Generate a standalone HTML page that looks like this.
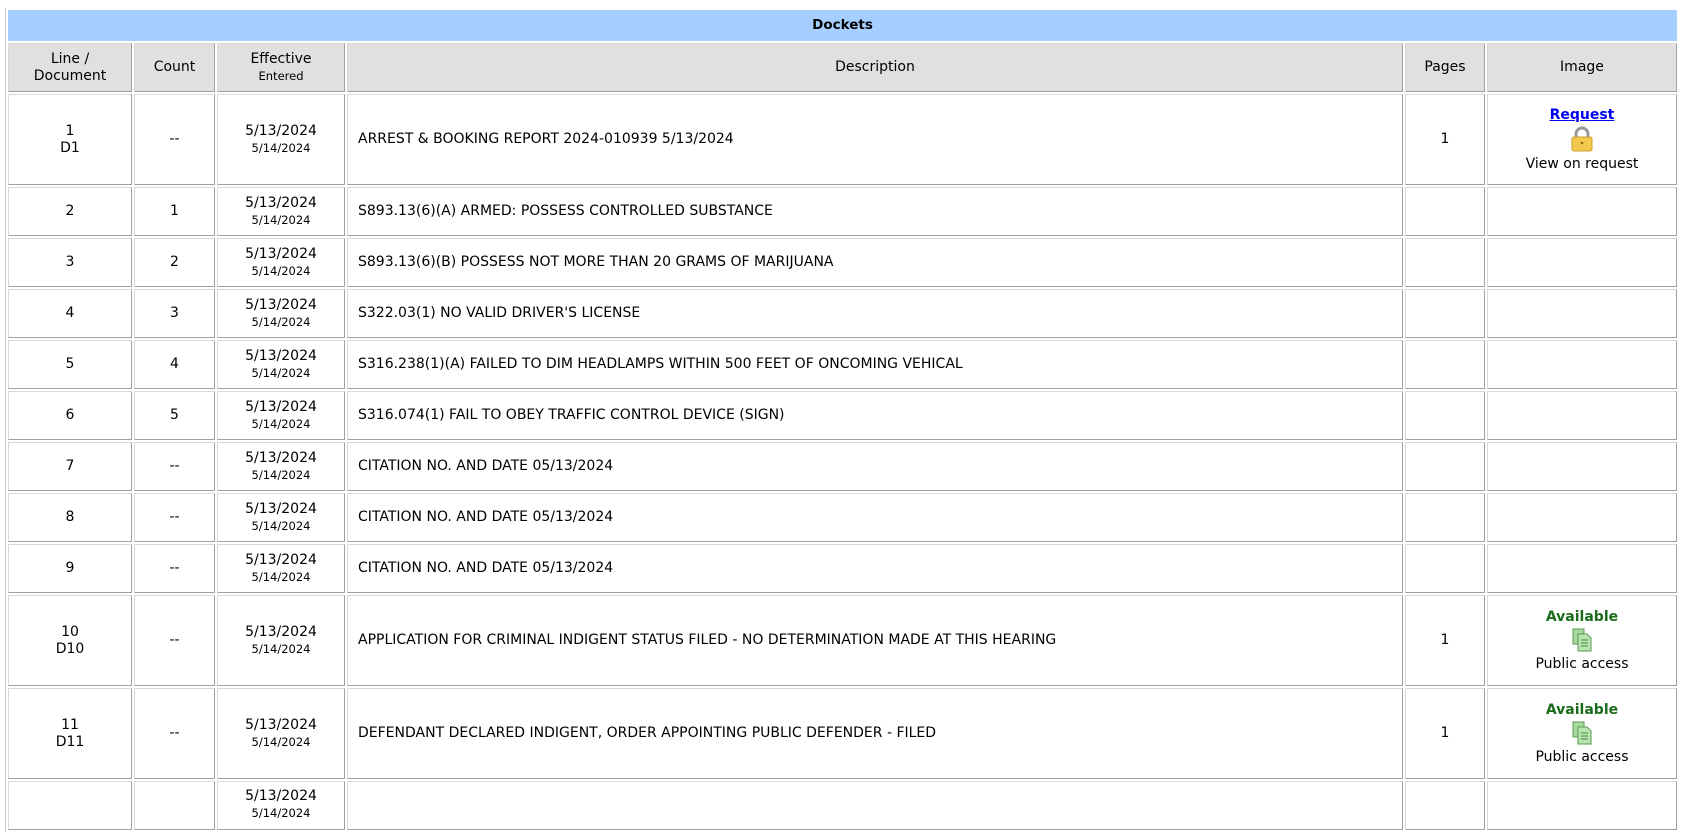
<!DOCTYPE html>
<html><head><meta charset="utf-8"><style>
html,body{margin:0;padding:0;background:#fff;width:1685px;height:796px;overflow:hidden}
body{font-family:"DejaVu Sans","Liberation Sans",sans-serif;font-size:14px;color:#000}
table{position:absolute;left:5px;top:8px;width:1674px;border-collapse:separate;border-spacing:2px;table-layout:fixed;border-left:1px solid #c8c8c8;border-top:0}
td{border:1px solid #a0a0a0;border-top-color:#d8d8d8;border-left-color:#d8d8d8;text-align:center;vertical-align:middle;padding:0;box-sizing:border-box;line-height:17px}
td.d{text-align:left;padding-left:10px}
.cap{background:#a6cfff;font-weight:bold;height:31px;border:0;font-size:13.5px}
tr.h td{background:#e0e0e0;height:49px}
tr.r td{height:49px}
tr.b td{height:91px}
small{font-size:11.5px;line-height:15px}
a{color:#0000ee;font-weight:bold;text-decoration:underline}
.av{color:#1a6b1a;font-weight:bold}
</style></head><body>
<table>
<colgroup><col style="width:124px"><col style="width:81px"><col style="width:128px"><col><col style="width:80px"><col style="width:190px"></colgroup>
<tr><td colspan="6" class="cap">Dockets</td></tr>
<tr class="h"><td>Line /<br>Document</td><td>Count</td><td>Effective<br><small>Entered</small></td><td>Description</td><td>Pages</td><td>Image</td></tr>
<tr class="b"><td>1<br>D1</td><td>--</td><td>5/13/2024<br><small>5/14/2024</small></td><td class="d">ARREST &amp; BOOKING REPORT 2024-010939 5/13/2024</td><td>1</td><td><a>Request</a><br><svg width="24" height="26" viewBox="0 0 24 26" style="display:block;margin:2px auto 4px"><path d="M6 12V8a6 6 0 0 1 12 0v4" fill="none" stroke="#999" stroke-width="3"/><rect x="2" y="11" width="20" height="14" rx="2" fill="#f2c94c" stroke="#c9a02a"/><circle cx="12" cy="17" r="1.3" fill="#8a6a10"/></svg>View on request</td></tr>
<tr class="r"><td>2</td><td>1</td><td>5/13/2024<br><small>5/14/2024</small></td><td class="d">S893.13(6)(A) ARMED: POSSESS CONTROLLED SUBSTANCE</td><td></td><td></td></tr>
<tr class="r"><td>3</td><td>2</td><td>5/13/2024<br><small>5/14/2024</small></td><td class="d">S893.13(6)(B) POSSESS NOT MORE THAN 20 GRAMS OF MARIJUANA</td><td></td><td></td></tr>
<tr class="r"><td>4</td><td>3</td><td>5/13/2024<br><small>5/14/2024</small></td><td class="d">S322.03(1) NO VALID DRIVER'S LICENSE</td><td></td><td></td></tr>
<tr class="r"><td>5</td><td>4</td><td>5/13/2024<br><small>5/14/2024</small></td><td class="d">S316.238(1)(A) FAILED TO DIM HEADLAMPS WITHIN 500 FEET OF ONCOMING VEHICAL</td><td></td><td></td></tr>
<tr class="r"><td>6</td><td>5</td><td>5/13/2024<br><small>5/14/2024</small></td><td class="d">S316.074(1) FAIL TO OBEY TRAFFIC CONTROL DEVICE (SIGN)</td><td></td><td></td></tr>
<tr class="r"><td>7</td><td>--</td><td>5/13/2024<br><small>5/14/2024</small></td><td class="d">CITATION NO. AND DATE 05/13/2024</td><td></td><td></td></tr>
<tr class="r"><td>8</td><td>--</td><td>5/13/2024<br><small>5/14/2024</small></td><td class="d">CITATION NO. AND DATE 05/13/2024</td><td></td><td></td></tr>
<tr class="r"><td>9</td><td>--</td><td>5/13/2024<br><small>5/14/2024</small></td><td class="d">CITATION NO. AND DATE 05/13/2024</td><td></td><td></td></tr>
<tr class="b"><td>10<br>D10</td><td>--</td><td>5/13/2024<br><small>5/14/2024</small></td><td class="d">APPLICATION FOR CRIMINAL INDIGENT STATUS FILED - NO DETERMINATION MADE AT THIS HEARING</td><td>1</td><td><span class="av">Available</span><br><svg width="22" height="24" viewBox="0 0 22 24" style="display:block;margin:2px auto 4px"><rect x="2" y="1" width="11" height="15" fill="#a8d8a0" stroke="#5a9a50"/><path d="M7 6h9l4 4v13H7z" fill="#b8e4b0" stroke="#5a9a50"/><path d="M10 12h7M10 15h7M10 18h7" stroke="#4a8a40"/></svg>Public access</td></tr>
<tr class="b"><td>11<br>D11</td><td>--</td><td>5/13/2024<br><small>5/14/2024</small></td><td class="d">DEFENDANT DECLARED INDIGENT, ORDER APPOINTING PUBLIC DEFENDER - FILED</td><td>1</td><td><span class="av">Available</span><br><svg width="22" height="24" viewBox="0 0 22 24" style="display:block;margin:2px auto 4px"><rect x="2" y="1" width="11" height="15" fill="#a8d8a0" stroke="#5a9a50"/><path d="M7 6h9l4 4v13H7z" fill="#b8e4b0" stroke="#5a9a50"/><path d="M10 12h7M10 15h7M10 18h7" stroke="#4a8a40"/></svg>Public access</td></tr>
<tr class="r"><td></td><td></td><td style="vertical-align:top;padding-top:6px">5/13/2024<br><small>5/14/2024</small></td><td></td><td></td><td></td></tr>
</table>
</body></html>
